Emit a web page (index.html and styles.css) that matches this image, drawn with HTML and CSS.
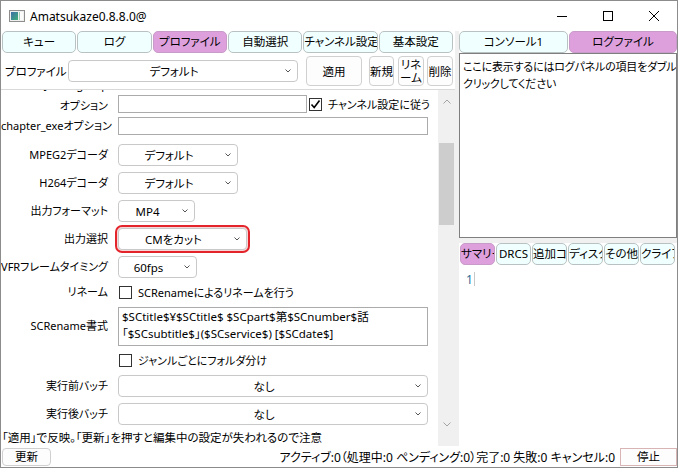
FILE: index.html
```html
<!DOCTYPE html>
<html lang="ja">
<head>
<meta charset="utf-8">
<title>Amatsukaze</title>
<link rel="stylesheet" href="styles.css">
</head>
<body>
<div class="window">
  <header class="titlebar">
    <svg class="app-icon" width="16" height="12" viewBox="0 0 16 12">
      <defs>
        <linearGradient id="ig" x1="0" y1="0" x2="1" y2="1">
          <stop offset="0" stop-color="#3d6fa8"/>
          <stop offset="1" stop-color="#3fae78"/>
        </linearGradient>
      </defs>
      <rect x="0.5" y="0.5" width="15" height="11" fill="#efefef" stroke="#8d8d8d"/>
      <rect x="2" y="2" width="7" height="8" fill="url(#ig)"/>
      <rect x="10" y="2" width="4" height="8" fill="#fbfbfb"/>
      <rect x="10" y="2" width="1" height="8" fill="#9fd0b4"/>
    </svg>
    <span class="title">Amatsukaze0.8.8.0@</span>
    <div class="caption-buttons">
      <span class="cap"><svg width="10" height="10" viewBox="0 0 10 10"><path d="M0 5.5H10" stroke="#000" stroke-width="1"/></svg></span>
      <span class="cap"><svg width="10" height="10" viewBox="0 0 10 10"><rect x="0.5" y="0.5" width="9" height="9" fill="none" stroke="#000" stroke-width="1"/></svg></span>
      <span class="cap"><svg width="10" height="10" viewBox="0 0 10 10"><path d="M0 0L10 10M10 0L0 10" stroke="#000" stroke-width="1"/></svg></span>
    </div>
  </header>

  <div class="main">
    <section class="left">
      <nav class="tabs">
        <span class="tab">キュー</span>
        <span class="tab">ログ</span>
        <span class="tab active">プロファイル</span>
        <span class="tab">自動選択</span>
        <span class="tab">チャンネル設定</span>
        <span class="tab">基本設定</span>
      </nav>

      <div class="profile-row">
        <span class="profile-label">プロファイル</span>
        <div class="combo profile-combo"><span class="val">デフォルト</span><span class="chev"><svg width="6" height="4" viewBox="0 0 6 4"><path d="M0.5 0.5L3 3L5.5 0.5" fill="none" stroke="#555"/></svg></span></div>
        <button class="btn btn-apply">適用</button>
        <button class="btn btn-new">新規</button>
        <button class="btn btn-rename">リネ<br>ーム</button>
        <button class="btn btn-del">削除</button>
      </div>

      <div class="settings">
        <div class="settings-main">
          <div class="scroll-view">
            <div class="scroll-content">
              <div class="row row-jls">
                <span class="label two-line"><span class="label-line1">JoinLogoScp</span>オプション</span>
                <span class="input input-jls"></span>
                <span class="check checked"><svg width="11" height="11" viewBox="0 0 11 11"><path d="M1.5 5.5L4.2 8.5L9.5 1.5" fill="none" stroke="#000" stroke-width="1.6"/></svg></span>
                <span class="check-label">チャンネル設定に従う</span>
              </div>
              <div class="row row-22 row-chap">
                <span class="label">chapter_exeオプション</span>
                <span class="input input-full"></span>
              </div>
              <div class="row row-28 row-first-combo">
                <span class="label">MPEG2デコーダ</span>
                <div class="combo w120"><span class="val">デフォルト</span><span class="chev"><svg width="6" height="4" viewBox="0 0 6 4"><path d="M0.5 0.5L3 3L5.5 0.5" fill="none" stroke="#555"/></svg></span></div>
              </div>
              <div class="row row-28">
                <span class="label">H264デコーダ</span>
                <div class="combo w120"><span class="val">デフォルト</span><span class="chev"><svg width="6" height="4" viewBox="0 0 6 4"><path d="M0.5 0.5L3 3L5.5 0.5" fill="none" stroke="#555"/></svg></span></div>
              </div>
              <div class="row row-28">
                <span class="label">出力フォーマット</span>
                <div class="combo w77"><span class="val">MP4</span><span class="chev"><svg width="6" height="4" viewBox="0 0 6 4"><path d="M0.5 0.5L3 3L5.5 0.5" fill="none" stroke="#555"/></svg></span></div>
              </div>
              <div class="row row-28">
                <span class="label">出力選択</span>
                <div class="combo w129 highlighted"><span class="val">CMをカット</span><span class="chev"><svg width="6" height="4" viewBox="0 0 6 4"><path d="M0.5 0.5L3 3L5.5 0.5" fill="none" stroke="#555"/></svg></span></div>
              </div>
              <div class="row row-28">
                <span class="label">VFRフレームタイミング</span>
                <div class="combo w79"><span class="val">60fps</span><span class="chev"><svg width="6" height="4" viewBox="0 0 6 4"><path d="M0.5 0.5L3 3L5.5 0.5" fill="none" stroke="#555"/></svg></span></div>
              </div>
              <div class="row row-22">
                <span class="label">リネーム</span>
                <span class="check check-first"></span>
                <span class="check-label">SCRenameによるリネームを行う</span>
              </div>
              <div class="row row-46">
                <span class="label">SCRename書式</span>
                <div class="textarea">$SCtitle$¥$SCtitle$ $SCpart$第$SCnumber$話<br>「$SCsubtitle$」($SCservice$) [$SCdate$]</div>
              </div>
              <div class="row row-23">
                <span class="label"></span>
                <span class="check check-first"></span>
                <span class="check-label">ジャンルごとにフォルダ分け</span>
              </div>
              <div class="row row-28">
                <span class="label">実行前バッチ</span>
                <div class="combo wfull"><span class="val">なし</span><span class="chev"><svg width="6" height="4" viewBox="0 0 6 4"><path d="M0.5 0.5L3 3L5.5 0.5" fill="none" stroke="#555"/></svg></span></div>
              </div>
              <div class="row row-28">
                <span class="label">実行後バッチ</span>
                <div class="combo wfull"><span class="val">なし</span><span class="chev"><svg width="6" height="4" viewBox="0 0 6 4"><path d="M0.5 0.5L3 3L5.5 0.5" fill="none" stroke="#555"/></svg></span></div>
              </div>
            </div>
          </div>
          <div class="hint">「適用」で反映。「更新」を押すと編集中の設定が失われるので注意</div>
        </div>
        <div class="vscroll">
          <span class="sb-arrow"><svg width="8" height="5" viewBox="0 0 8 5"><path d="M0.5 4.5L4 1L7.5 4.5" fill="none" stroke="#a3a3a3"/></svg></span>
          <div class="sb-track"><div class="sb-thumb"></div></div>
          <span class="sb-arrow"><svg width="8" height="5" viewBox="0 0 8 5"><path d="M0.5 0.5L4 4L7.5 0.5" fill="none" stroke="#a3a3a3"/></svg></span>
          <span class="sb-rest"></span>
        </div>
      </div>
    </section>

    <div class="splitter"></div>

    <section class="right">
      <nav class="tabs right-tabs">
        <span class="tab rt1">コンソール1</span>
        <span class="tab active rt2">ログファイル</span>
      </nav>
      <div class="logbox">ここに表示するにはログパネルの項目をダブル<br>クリックしてください</div>
      <div class="hsplit"></div>
      <nav class="tabs small-tabs">
        <span class="tab stab active">サマリー</span>
        <span class="tab stab">DRCS</span>
        <span class="tab stab">追加コマンド</span>
        <span class="tab stab">ディスク</span>
        <span class="tab stab">その他</span>
        <span class="tab stab">クライアント</span>
      </nav>
      <div class="editor">
        <div class="editor-line"><span class="lineno">1</span><span class="gutter-line"></span></div>
      </div>
    </section>
  </div>

  <footer class="statusbar">
    <button class="btn btn-refresh">更新</button>
    <span class="status-text">アクティブ:0（処理中:0 ペンディング:0）完了:0 失敗:0 キャンセル:0</span>
    <button class="btn btn-stop">停止</button>
  </footer>
</div>
</body>
</html>
```

FILE: styles.css
```css
* { box-sizing: border-box; }
html, body { margin: 0; padding: 0; }
body {
  width: 678px;
  height: 468px;
  overflow: hidden;
  background: #fff;
  font-family: "Noto Sans", "Noto Sans CJK JP", sans-serif;
  font-size: 11px;
  color: #000;
  font-feature-settings: "palt" 1;
}
button { font: inherit; color: inherit; font-feature-settings: "palt" 1; }

.window {
  width: 678px;
  height: 468px;
  border: 1px solid #8c8c8c;
  display: flex;
  flex-direction: column;
  background: #fff;
}

/* title bar */
.titlebar {
  height: 30px;
  flex: none;
  display: flex;
  align-items: center;
}
.app-icon { margin-left: 8px; flex: none; }
.title { margin-left: 5px; font-size: 12px; font-feature-settings: normal; }
.caption-buttons { margin-left: auto; display: flex; height: 100%; }
.cap { width: 46px; display: flex; align-items: center; justify-content: center; }

/* main */
.main { flex: 1; display: flex; min-height: 0; }
.left { width: 454px; flex: none; display: flex; flex-direction: column; }
.splitter { width: 4px; flex: none; background: #f0f0f0; }
.right { width: 218px; flex: none; display: flex; flex-direction: column; }

/* tabs */
.tabs { display: flex; gap: 1px; height: 22px; flex: none; padding: 0 2px 0 1px; }
.tab {
  flex: 1;
  display: block;
  background: #f0ffff;
  border: 1px solid #b9c2c2;
  border-radius: 5px;
  text-align: center;
  line-height: 20px;
  white-space: nowrap;
  overflow: hidden;
  font-size: 11.5px;
}
.tab.active { background: #dda0dd; border-color: #c99bc9; }

.right-tabs { padding: 0; }
.rt1 { flex: none; width: 109px; }
.rt2 { flex: none; width: 108px; }

/* profile row */
.profile-row { height: 36px; flex: none; display: flex; align-items: center; }
.profile-label { width: 67px; padding-left: 4px; white-space: nowrap; font-size: 11.5px; }
.btn {
  background: #fdfdfd;
  border: 1px solid #d0d0d0;
  border-radius: 4px;
  padding: 0;
  height: 30px;
  line-height: 13px;
  font-size: 11.5px;
}
.btn-apply { width: 56px; margin-left: 8px; }
.btn-new { width: 25px; margin-left: 7px; }
.btn-rename { width: 26px; margin-left: 4px; }
.btn-del { width: 26px; margin-left: 3px; }

/* combo */
.combo {
  display: flex;
  align-items: center;
  height: 22px;
  background: #fff;
  border: 1px solid #c9c9c9;
  border-radius: 4px;
  flex: none;
  font-size: 11.5px;
}
.combo .val { flex: 1; text-align: center; white-space: nowrap; }
.combo .chev { width: 18px; display: flex; justify-content: center; align-items: center; }
.profile-combo { width: 230px; }
.w120 { width: 120px; }
.w77 { width: 77px; }
.w129 { width: 129px; }
.w79 { width: 79px; }
.wfull { width: 310px; }
.highlighted {
  outline: 2px solid #e3242b;
  outline-offset: 1px;
  box-shadow: 0 0 0 1px #f7d6d7;
}

/* settings area */
.settings { flex: 1; display: flex; border-top: 1px solid #d9d9d9; min-height: 0; }
.settings-main { flex: 1; display: flex; flex-direction: column; min-width: 0; }
.scroll-view { flex: 1; overflow: hidden; }
.scroll-content { margin-top: -11px; padding-top: 1px; }
.hint { height: 16px; flex: none; line-height: 16px; padding-left: 1px; white-space: nowrap; font-size: 11.5px; }

.row { display: flex; align-items: center; gap: 0; }
.label {
  width: 107px;
  flex: none;
  text-align: right;
  margin-right: 10px;
  white-space: nowrap;
  line-height: 16px;
}
.row-jls { height: 34px; align-items: flex-end; }
.row-jls .label { line-height: 17px; }
.label-line1 { display: block; margin-bottom: 4px; margin-top: -4px; }
.row-chap { margin-top: 1px; }
.row-first-combo { margin-top: 4px; }
.row-22 { height: 22px; }
.row-23 { height: 23px; }
.row-28 { height: 28px; }
.row-46 { height: 46px; }

.input { display: block; height: 18px; border: 1px solid #ababab; background: #fff; flex: none; }
.input-jls { width: 189px; }
.row-jls .input { margin-bottom: 1px; }
.input-full { width: 310px; }

.check {
  width: 13px;
  height: 13px;
  border: 1px solid #333;
  background: #fff;
  flex: none;
  display: flex;
  align-items: center;
  justify-content: center;
}
.row-jls .check { margin-left: 2px; margin-bottom: 3px; }
.check-first { margin-left: 1px; }
.check-label { margin-left: 6px; white-space: nowrap; line-height: 17px; font-size: 11px; }
.row-jls .check-label { margin-bottom: 1px; }

.textarea {
  width: 310px;
  height: 39px;
  border: 1px solid #ababab;
  padding: 0 3px;
  line-height: 17px;
  white-space: nowrap;
  overflow: hidden;
  flex: none;
  font-size: 11.5px;
}

/* scrollbar */
.vscroll { width: 17px; flex: none; background: #f0f0f0; display: flex; flex-direction: column; }
.sb-arrow { height: 22px; flex: none; display: flex; align-items: center; justify-content: center; }
.sb-track { flex: 1; }
.sb-thumb { margin: 31px 1px 0 1px; height: 82px; background: #cdcdcd; }
.sb-rest { height: 11px; flex: none; }

/* right panel */
.logbox {
  height: 185px;
  flex: none;
  border: 1px solid #7f7f7f;
  padding: 4px 2px 0 3px;
  line-height: 17px;
  white-space: nowrap;
  overflow: hidden;
  font-size: 11px;
  letter-spacing: -0.2px;
}
.hsplit { height: 5px; flex: none; background: #f0f0f0; }
.small-tabs { padding: 0 0 0 1px; }
.stab { flex: none; width: 35px; text-align: center; }
.editor { flex: 1; background: #fff; padding-top: 6px; }
.editor-line { display: flex; align-items: center; height: 16px; }
.lineno { margin-left: 7px; color: #2b6f9a; width: 8px; font-size: 12px; }
.gutter-line { width: 1px; height: 14px; background: #c8c8c8; }

/* status bar */
.statusbar { height: 21px; flex: none; display: flex; align-items: center; }
.btn-refresh { width: 49px; height: 18px; margin-left: 1px; line-height: 16px; }
.status-text { margin-left: auto; white-space: nowrap; font-size: 12px; }
.btn-stop { width: 57px; height: 18px; margin-left: 5px; line-height: 16px; border-color: #d9b4b4; border-radius: 0; }
```
